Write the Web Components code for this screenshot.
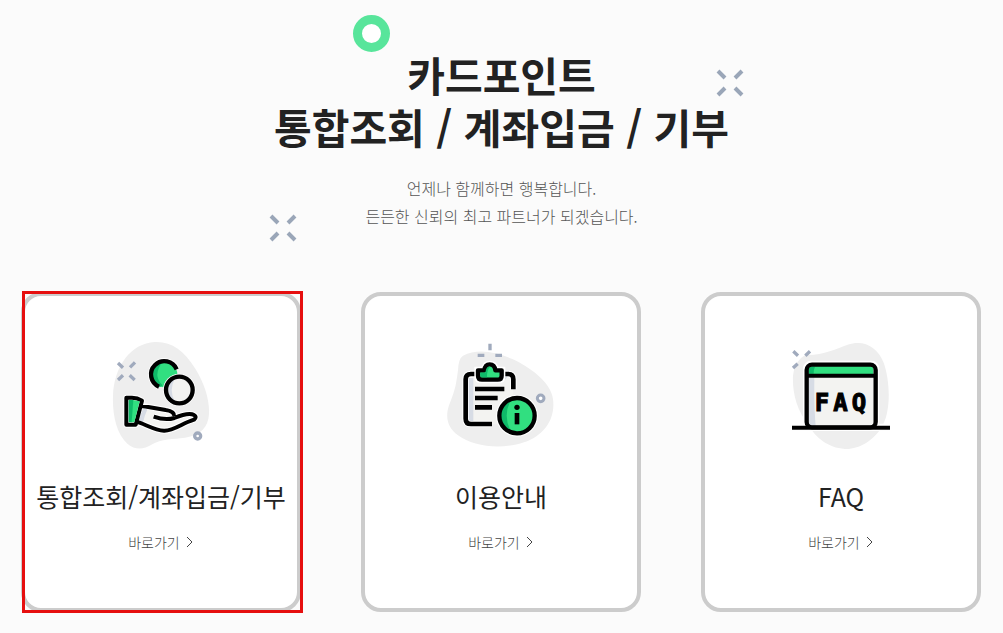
<!DOCTYPE html>
<html lang="ko">
<head>
    <meta charset="UTF-8">
    <meta name="viewport" content="width=device-width, initial-scale=1">
    <title>카드포인트 통합조회</title>
    <style>
        body {
            margin: 0;
            background: #fbfbfb;
            color: #222;
            font-family: "Noto Sans CJK KR", "Noto Sans", sans-serif;
        }
    </style>
</head>
<body>
    <point-page>
        <point-hero slot="hero">
            <span slot="title">카드포인트<br>통합조회 / 계좌입금 / 기부</span>
            <span slot="desc">언제나 함께하면 행복합니다.<br>든든한 신뢰의 최고 파트너가 되겠습니다.</span>
        </point-hero>
        <point-card icon="hand" selected>통합조회/계좌입금/기부</point-card>
        <point-card icon="guide">이용안내</point-card>
        <point-card icon="faq">FAQ</point-card>
    </point-page>

    <script>
        const icones = {
            hand: `
                <svg viewBox="3 30 360 330" aria-hidden="true">
                    <path fill="#eee" d="M165 36C215 34 252 61 285 115C315 163 329 211 327 252C325 292 301 317 255 323C220 328 185 325 154 344C133 358 105 361 83 342C48 311 37 253 39 197C42 112 91 39 165 36Z"/>
                    <g stroke="#a0aabd" stroke-width="10">
                        <path d="M54 99l15 14M105 97l-15 15M54 150l15-14M104 150l-15-14"/>
                        <circle cx="293" cy="318" r="9" fill="#fff"/>
                    </g>
                    <path fill="none" stroke="#fff" stroke-width="18" d="M177 170A40 40 0 1 1 230 118"/>
                    <circle cx="193" cy="133" r="39" fill="#31df80"/>
                    <path fill="#0fba69" d="M188 95A39 39 0 0 0 180 171L188 166Q156 136 188 95Z"/>
                    <path fill="none" stroke="#000" stroke-width="13" d="M177 170A40 40 0 1 1 230 118"/>
                    <circle cx="238" cy="180" r="49" fill="#fff"/>
                    <circle cx="238" cy="180" r="40" fill="#f3f3f1"/>
                    <path fill="#d7dce5" d="M226 143Q197 151 198 181Q201 210 226 217Q204 181 226 143Z"/>
                    <circle cx="238" cy="180" r="40" fill="none" stroke="#000" stroke-width="13"/>
                    <path fill="#f3f3f1" d="M121 228L199 242Q224 245 224 265L265 253Q292 251 288 267L235 290Q192 312 153 292L112 276Z"/>
                    <g fill="none" stroke-linejoin="round">
                        <path stroke="#fff" stroke-width="18" d="M79 203H96Q112 203 126 212L107 284H79ZM123 227L197 240Q224 244 222 258M161 260C190 270 210 268 223 264C247 254 271 249 282 255Q292 260 282 269C246 280 221 303 192 302C162 301 132 280 108 275"/>
                        <path stroke="#d7dce5" stroke-width="13" d="M136 236Q126 258 123 276"/>
                        <path stroke="#000" stroke-width="12" d="M79 203H96Q112 203 126 212L107 284H79ZM123 227L197 240Q224 244 222 258M161 260C190 270 210 268 223 264C247 254 271 249 282 255Q292 260 282 269C246 280 221 303 192 302C162 301 132 280 108 275"/>
                    </g>
                    <path fill="#31df80" d="M98 210L119 214L103 277H93Z"/>
                    <path fill="#0fba69" d="M86 210h14l-5 67h-9Z"/>
                </svg>
            `,
            guide: `
                <svg viewBox="18 30 360 330" aria-hidden="true">
                    <path fill="#eee" d="M84 77C125 56 178 63 232 87C284 111 348 156 354 207C362 269 326 316 267 337C201 359 115 351 69 316C35 291 29 257 45 218C62 177 64 158 69 121Q70 86 84 77Z"/>
                    <path stroke="#a0aabd" stroke-width="10" d="M165 41v20M128 76h20M181 76h20"/>
                    <circle cx="317" cy="205" r="10" fill="#fff" stroke="#a0aabd" stroke-width="9"/>
                    <path fill="#f3f3f1" d="M103 132H221Q235 132 235 145V283H94V143Q94 132 103 132Z"/>
                    <path fill="none" stroke="#fff" stroke-width="20" d="M127 132H108Q92 132 92 148V266Q92 282 108 282H171M202 132H220Q235 132 235 148V178"/>
                    <path fill="#d7dce5" d="M101 144H115V273H108Q101 273 101 264ZM205 139h13l-9 12Z"/>
                    <path fill="none" stroke="#000" stroke-width="14" d="M127 132H108Q92 132 92 148V266Q92 282 108 282H171M202 132H220Q235 132 235 148V178"/>
                    <path fill="#fff" d="M118 110H140Q145 92 164 92Q184 92 190 110H211V140Q211 160 190 160H140Q118 160 118 140Z"/>
                    <path fill="#31df80" stroke="#000" stroke-width="13" stroke-linejoin="round" d="M129 121H148Q150 103 164 103Q179 103 181 121H200V137Q200 149 188 149H141Q129 149 129 137Z"/>
                    <path fill="#0fba69" d="M136 128H151Q154 108 165 110Q155 121 156 142H143Q136 142 136 136Z"/>
                    <path stroke="#000" stroke-width="14" d="M120 177H208M120 204H188M120 232H171"/>
                    <circle cx="246" cy="257" r="63" fill="#fff"/>
                    <circle cx="246" cy="257" r="54" fill="#31df80"/>
                    <path fill="#0fba69" d="M229 208A51 51 0 0 0 229 306Q201 257 229 208Z"/>
                    <circle cx="246" cy="257" r="53" fill="none" stroke="#000" stroke-width="13"/>
                    <circle cx="246" cy="232" r="8"/>
                    <path stroke="#000" stroke-width="14" d="M246 249v34"/>
                </svg>
            `,
            faq: `
                <svg viewBox="3 30 360 330" aria-hidden="true">
                    <path fill="#eee" d="M76 75C128 77 169 56 203 44C251 28 292 50 311 98C330 151 333 235 310 282C286 331 235 359 195 357C144 354 104 322 85 283C49 239 37 188 39 137Q43 92 76 75Z"/>
                    <path stroke="#a0aabd" stroke-width="10" d="M40 64l14 13M90 64l-14 13M39 114l14-13"/>
                    <rect x="69" y="92" width="229" height="207" rx="24" fill="#fff"/>
                    <path stroke="#fff" stroke-width="22" d="M36 292H330"/>
                    <rect x="80" y="104" width="206" height="188" rx="16" fill="#f3f3f1"/>
                    <path fill="#d7dce5" d="M87 142H103Q102 237 107 287H94L87 280Z"/>
                    <path fill="#31df80" d="M86 133V118Q86 108 98 108H269Q280 108 280 118V133Z"/>
                    <path fill="#0fba69" d="M86 131V120Q86 110 98 110H105Q100 120 101 131Z"/>
                    <rect x="80" y="104" width="207" height="188" rx="16" fill="none" stroke="#000" stroke-width="13"/>
                    <path stroke="#000" stroke-width="12" d="M80 137H287M36 293H330"/>
                    <text x="104 160 215" y="244" font-family="DejaVu Sans Mono" font-size="72" font-weight="700" stroke="#000" stroke-width="3">FAQ</text>
                </svg>
            `
        };

        class PointPage extends HTMLElement {
            constructor() {
                super();
                this.attachShadow({ mode: 'open' });
            }

            connectedCallback() {
                this.shadowRoot.innerHTML = `
                    <style>
                        :host {
                            display: block;
                        }

                        .cards {
                            display: flex;
                            flex-wrap: wrap;
                            justify-content: center;
                            gap: 60px;
                            padding: 0 21px 20px 20px;
                        }
                    </style>

                    <main>
                        <slot name="hero"></slot>
                        <div class="cards"><slot></slot></div>
                    </main>
                `;
            }
        }

        class PointHero extends HTMLElement {
            constructor() {
                super();
                this.attachShadow({ mode: 'open' });
            }

            connectedCallback() {
                this.shadowRoot.innerHTML = `
                    <style>
                        :host {
                            display: block;
                            position: relative;
                            padding: 48px 20px 62px;
                            text-align: center;
                        }

                        h1 {
                            margin: 0 0 22px;
                            font-size: 41px;
                            line-height: 52px;
                            font-weight: 700;
                        }

                        p {
                            margin: 0;
                            color: #555;
                            font-size: 16px;
                            line-height: 28px;
                            font-weight: 300;
                        }

                        .ring {
                            position: absolute;
                            top: 15px;
                            left: calc(50% - 149px);
                            box-sizing: border-box;
                            width: 37px;
                            height: 37px;
                            border: 9px solid #58e59b;
                            border-radius: 50%;
                            background: #fff;
                        }

                        .spark {
                            position: absolute;
                            width: 28px;
                            height: 28px;
                            stroke: #9aa6b8;
                            stroke-width: 4;
                        }

                        .spark.right {
                            top: 69px;
                            left: calc(50% + 214px);
                        }

                        .spark.left {
                            top: 214px;
                            left: calc(50% - 233px);
                        }
                    </style>

                    <span class="ring"></span>
                    ${this.renderSpark('right')}
                    ${this.renderSpark('left')}
                    <h1><slot name="title"></slot></h1>
                    <p><slot name="desc"></slot></p>
                `;
            }

            renderSpark(side) {
                return `
                    <svg class="spark ${side}" viewBox="0 0 28 28" aria-hidden="true">
                        <path d="M2 2l7 7M26 2l-7 7M2 26l7-7M26 26l-7-7"/>
                    </svg>
                `;
            }
        }

        class PointCard extends HTMLElement {
            constructor() {
                super();
                this.attachShadow({ mode: 'open' });
            }

            connectedCallback() {
                this.shadowRoot.innerHTML = `
                    <style>
                        :host {
                            display: block;
                            position: relative;
                            box-sizing: border-box;
                            width: 280px;
                            min-height: 320px;
                            padding: 44px 0;
                            border: 4px solid #ccc;
                            border-radius: 20px;
                            background: #fff;
                            text-align: center;
                        }

                        /* red frame over the current card */
                        :host([selected])::after {
                            content: "";
                            position: absolute;
                            inset: -5px -6px -5px -3px;
                            border: 3px solid #e60f0f;
                            pointer-events: none;
                        }

                        svg {
                            display: block;
                        }

                        .icon svg {
                            width: 120px;
                            height: 110px;
                            margin: 0 auto 28px;
                        }

                        h2 {
                            margin: 0 0 15px;
                            font-size: 25px;
                            line-height: 36px;
                            font-weight: 400;
                            white-space: nowrap;
                        }

                        a {
                            display: inline-flex;
                            align-items: center;
                            gap: 6px;
                            color: #444;
                            font-size: 14px;
                            line-height: 20px;
                            font-weight: 300;
                            text-decoration: none;
                        }

                        a svg {
                            width: 8px;
                            height: 12px;
                            fill: none;
                            stroke: #444;
                        }
                    </style>

                    <div class="icon">${icones[this.getAttribute('icon')] || ''}</div>
                    <h2><slot></slot></h2>
                    <a href="#">
                        바로가기
                        <svg viewBox="0 0 8 12" aria-hidden="true"><path d="M1 1l5 5l-5 5"/></svg>
                    </a>
                `;
            }
        }

        customElements.define('point-page', PointPage);
        customElements.define('point-hero', PointHero);
        customElements.define('point-card', PointCard);
    </script>
</body>
</html>
